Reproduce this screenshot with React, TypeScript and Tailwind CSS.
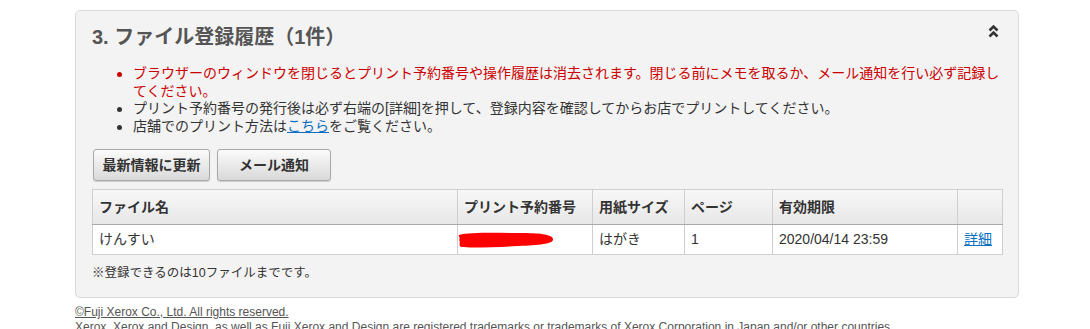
import React from "react";

// ================================
// File history panel
// ================================

const font = "font-['Liberation_Sans','Noto_Sans_CJK_JP',sans-serif]";

function DoubleChevronUp() {
  return (
    <svg width="11" height="14" viewBox="0 0 11 14" className="text-[#333]">
      <path d="M1.5 6.5 L5.5 2.5 L9.5 6.5" fill="none" stroke="currentColor" strokeWidth="2.6" />
      <path d="M1.5 12.5 L5.5 8.5 L9.5 12.5" fill="none" stroke="currentColor" strokeWidth="2.6" />
    </svg>
  );
}

function Redacted() {
  return (
    <svg width="98" height="20" viewBox="0 0 98 20" className="block">
      <path
        d="M1 5 C12 2 40 3 62 3 C80 3 94 4 95 9 C96 14 82 15 60 16 C40 17 14 18 3 17 C0 15 3 12 1 10 C3 8 0 7 1 5 Z"
        fill="#ff0000"
      />
    </svg>
  );
}

function Button({ label, width }: { label: string; width: string }) {
  return (
    <button
      className={`${width} h-[32px] rounded-[3px] border border-[#a8a8a8] bg-gradient-to-b from-[#fbfbfb] to-[#d9d9d9] text-[14px] font-bold text-[#333] shadow-[0_1px_1px_rgba(0,0,0,0.15)]`}
    >
      {label}
    </button>
  );
}

const headers = ["ファイル名", "プリント予約番号", "用紙サイズ", "ページ", "有効期限", ""];

export default function App() {
  return (
    <div className={`${font} bg-white min-h-[329px] overflow-hidden pt-[10px]`}>
      <div className="ml-[75px] w-[944px] rounded-[5px] border border-[#d8d8d8] bg-[#f3f3f3] pl-[16px] pr-[16px] pt-[14px] pb-[15px]">
        {/* Title */}
        <div className="flex items-start justify-between">
          <h2 className="text-[20px] leading-[24px] font-bold text-[#555]">3. ファイル登録履歴（1件）</h2>
          <div className="mt-[-1px] mr-[3px]">
            <DoubleChevronUp />
          </div>
        </div>

        {/* Notes */}
        <ul className="mt-[16px] text-[14px] leading-[17.5px] text-[#333]">
          <li className="flex text-[#cc0000]">
            <span className="w-[41px] shrink-0 flex justify-end pr-[11px] pt-[7px]">
              <span className="block w-[5px] h-[5px] rounded-full bg-[#cc0000]" />
            </span>
            <span>
              ブラウザーのウィンドウを閉じるとプリント予約番号や操作履歴は消去されます。閉じる前にメモを取るか、メール通知を行い必ず記録してください。
            </span>
          </li>
          <li className="flex">
            <span className="w-[41px] shrink-0 flex justify-end pr-[11px] pt-[7px]">
              <span className="block w-[5px] h-[5px] rounded-full bg-[#333]" />
            </span>
            <span>プリント予約番号の発行後は必ず右端の[詳細]を押して、登録内容を確認してからお店でプリントしてください。</span>
          </li>
          <li className="flex">
            <span className="w-[41px] shrink-0 flex justify-end pr-[11px] pt-[7px]">
              <span className="block w-[5px] h-[5px] rounded-full bg-[#333]" />
            </span>
            <span>
              店舗でのプリント方法は<a className="text-[#0a6fc2] underline">こちら</a>をご覧ください。
            </span>
          </li>
        </ul>

        {/* Actions */}
        <div className="mt-[14px] flex gap-[7px] pl-[1px]">
          <Button label="最新情報に更新" width="w-[117px]" />
          <Button label="メール通知" width="w-[114px]" />
        </div>

        {/* Table */}
        <table className="mt-[8px] w-[910px] table-fixed border-collapse text-[14px] text-[#333]">
          <colgroup>
            <col className="w-[365px]" />
            <col className="w-[135px]" />
            <col className="w-[92px]" />
            <col className="w-[88px]" />
            <col className="w-[185px]" />
            <col className="w-[45px]" />
          </colgroup>
          <thead>
            <tr className="h-[35px] bg-gradient-to-b from-[#f7f7f7] to-[#e7e7e7]">
              {headers.map((h, i) => (
                <th
                  key={i}
                  className="border border-[#cfcfcf] border-b-[#a9a9a9] px-[6px] text-left font-bold"
                >
                  {h}
                </th>
              ))}
            </tr>
          </thead>
          <tbody>
            <tr className="h-[30px] bg-white">
              <td className="border border-[#cfcfcf] px-[6px]">けんすい</td>
              <td className="border border-[#cfcfcf] px-0">
                <Redacted />
              </td>
              <td className="border border-[#cfcfcf] px-[6px]">はがき</td>
              <td className="border border-[#cfcfcf] px-[6px]">1</td>
              <td className="border border-[#cfcfcf] px-[6px]">2020/04/14 23:59</td>
              <td className="border border-[#cfcfcf] px-[6px]">
                <a className="text-[#0a6fc2] underline">詳細</a>
              </td>
            </tr>
          </tbody>
        </table>

        <p className="mt-[9px] text-[12.5px] leading-[18px] text-[#333]">※登録できるのは10ファイルまでです。</p>
      </div>

      {/* Footer */}
      <div className="ml-[75px] mt-[7px] text-[12px] leading-[15px] text-[#555] font-['Liberation_Sans',sans-serif]">
        <p className="underline">©Fuji Xerox Co., Ltd. All rights reserved.</p>
        <p>
          Xerox, Xerox and Design, as well as Fuji Xerox and Design are registered trademarks or trademarks of Xerox
          Corporation in Japan and/or other countries.
        </p>
      </div>
    </div>
  );
}
